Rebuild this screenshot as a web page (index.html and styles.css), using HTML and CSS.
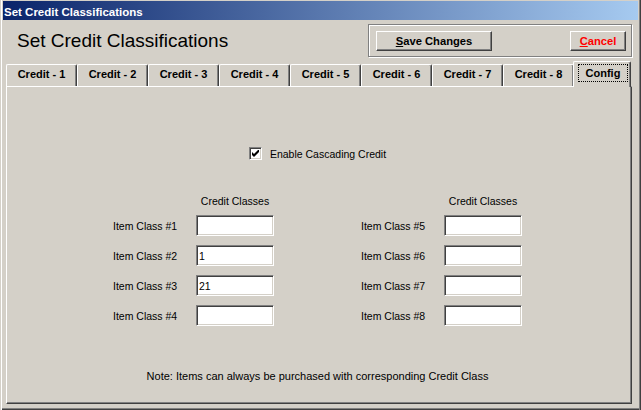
FILE: index.html
```html
<!DOCTYPE html>
<html lang="en">
  <head>
    <meta charset="UTF-8" />
    <title>Set Credit Classifications</title>
    <link rel="stylesheet" href="styles.css">
  </head>
  <body>
    <div class="window">
      <div class="titlebar">Set Credit Classifications</div>

      <div class="header">
        <h1>Set Credit Classifications</h1>
        <div class="actions">
          <button class="btn btn-save"><u>S</u>ave Changes</button>
          <button class="btn btn-cancel"><u>C</u>ancel</button>
        </div>
      </div>

      <div class="tabs">
        <div class="tab">Credit - 1</div>
        <div class="tab">Credit - 2</div>
        <div class="tab">Credit - 3</div>
        <div class="tab">Credit - 4</div>
        <div class="tab">Credit - 5</div>
        <div class="tab">Credit - 6</div>
        <div class="tab">Credit - 7</div>
        <div class="tab">Credit - 8</div>
        <div class="tab active"><span class="focus">Config</span></div>
      </div>

      <div class="panel">
        <label class="cascade">
          <span class="checkbox">
            <svg width="7" height="7" viewBox="0 0 7 7">
              <polygon points="0,2 2,4 7,-1 7,2 2,7 0,5" fill="#000" />
            </svg>
          </span>
          Enable Cascading Credit
        </label>

        <div class="classes">
          <div class="class-col">
            <div class="col-head">Credit Classes</div>
            <label for="c1">Item Class #1</label><input id="c1" type="text" value="" />
            <label for="c2">Item Class #2</label><input id="c2" type="text" value="1" />
            <label for="c3">Item Class #3</label><input id="c3" type="text" value="21" />
            <label for="c4">Item Class #4</label><input id="c4" type="text" value="" />
          </div>
          <div class="class-col">
            <div class="col-head">Credit Classes</div>
            <label for="c5">Item Class #5</label><input id="c5" type="text" value="" />
            <label for="c6">Item Class #6</label><input id="c6" type="text" value="" />
            <label for="c7">Item Class #7</label><input id="c7" type="text" value="" />
            <label for="c8">Item Class #8</label><input id="c8" type="text" value="" />
          </div>
        </div>

        <p class="note">Note: Items can always be purchased with corresponding Credit Class</p>
      </div>
    </div>
  </body>
</html>
```

FILE: styles.css
```css
* {
  box-sizing: border-box;
  margin: 0;
  padding: 0;
}

body {
  background: #d4d0c8;
  font-family: "Liberation Sans", Arial, sans-serif;
  color: #000;
}

.window {
  width: 641px;
  height: 410px;
  padding: 1px 3px 0;
  background: #d4d0c8;
  box-shadow: inset 1px 0 0 #d4d0c8, inset 2px 0 0 #fff,
    inset -1px 0 0 #404040, inset -2px 0 0 #808080,
    inset 0 -1px 0 #404040, inset 0 -2px 0 #808080;
}

.titlebar {
  height: 19px;
  padding: 3px 0 0 1px;
  line-height: 16px;
  background: linear-gradient(to right, #0a246a, #a6caf0);
  color: #fff;
  font-weight: bold;
  font-size: 11.5px;
}

.header {
  height: 41px;
  display: flex;
  justify-content: space-between;
  align-items: flex-start;
  padding-right: 6px;
}

h1 {
  margin: 9px 0 0 14px;
  font-size: 19px;
  line-height: 23px;
  font-weight: normal;
}

.actions {
  width: 264px;
  height: 33px;
  margin-top: 4px;
  padding: 6px 5px 0 7px;
  display: flex;
  justify-content: space-between;
  align-items: flex-start;
  border: 1px solid #808080;
  box-shadow: inset 1px 1px 0 #fff, 1px 1px 0 #fff;
}

.btn {
  height: 20px;
  background: #d4d0c8;
  border: 1px solid;
  border-color: #fff #404040 #404040 #fff;
  box-shadow: inset -1px -1px 0 #808080;
  font-family: "Liberation Sans", Arial, sans-serif;
  font-size: 11.2px;
  font-weight: bold;
  color: #000;
  cursor: pointer;
}

.btn-save {
  width: 116px;
}

.btn-cancel {
  width: 56px;
  color: #f00;
}

.tabs {
  display: flex;
  align-items: flex-end;
  height: 25px;
  padding-left: 3px;
}

.tab {
  width: 71px;
  height: 22px;
  padding-bottom: 2px;
  border-left: 1px solid #fff;
  border-top: 1px solid #fff;
  border-right: 1px solid #404040;
  border-radius: 2px 2px 0 0;
  box-shadow: inset -1px 0 0 #808080;
  text-align: center;
  font-size: 11px;
  font-weight: bold;
  line-height: 19px;
}

.tab.active {
  position: relative;
  z-index: 1;
  width: 58px;
  height: 26px;
  margin-left: -1px;
  margin-bottom: -1px;
  padding: 0;
  background: #d4d0c8;
}

.focus {
  display: block;
  height: 18px;
  margin: 2px 2px 0 4px;
  border: 1px dotted #000;
  line-height: 16px;
}

.panel {
  width: 626px;
  height: 318px;
  margin-left: 3px;
  padding: 60px 3px 0 0;
  border-left: 1px solid #fff;
  border-top: 1px solid #fff;
  border-right: 1px solid #404040;
  border-bottom: 1px solid #404040;
  box-shadow: inset -1px -1px 0 #808080;
  font-size: 10.5px;
}

.cascade {
  display: flex;
  justify-content: center;
  align-items: center;
  gap: 8px;
  height: 13px;
}

.checkbox {
  width: 13px;
  height: 13px;
  display: flex;
  justify-content: center;
  align-items: center;
  background: #fff;
  border: 1px solid;
  border-color: #808080 #fff #fff #808080;
  box-shadow: inset 1px 1px 0 #404040, inset -1px -1px 0 #d4d0c8;
}

.classes {
  display: flex;
  justify-content: center;
  gap: 87px;
  margin-top: 35px;
}

.class-col {
  display: grid;
  grid-template-columns: 83px 78px;
  row-gap: 9px;
  align-items: center;
}

.col-head {
  grid-column: 2;
  text-align: center;
  line-height: 13px;
  margin-bottom: -2px;
}

input {
  width: 78px;
  height: 21px;
  padding: 0 2px;
  background: #fff;
  border: 1px solid;
  border-color: #808080 #fff #fff #808080;
  box-shadow: inset 1px 1px 0 #404040, inset -1px -1px 0 #d4d0c8;
  font-family: "Liberation Sans", Arial, sans-serif;
  font-size: 10.5px;
  color: #000;
  outline: none;
}

.note {
  margin-top: 44px;
  text-align: center;
  font-size: 11px;
  line-height: 13px;
}
```
